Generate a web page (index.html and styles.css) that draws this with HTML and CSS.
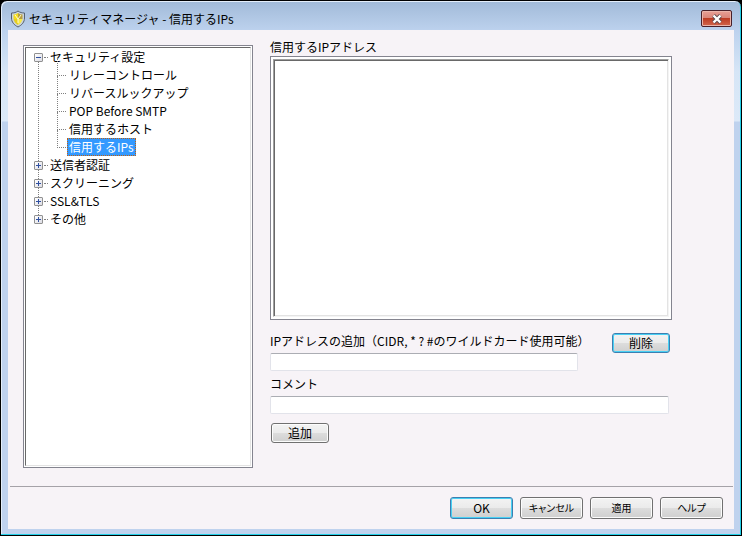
FILE: index.html
```html
<!DOCTYPE html>
<html lang="ja">
<head>
  <meta charset="UTF-8" />
  <meta name="viewport" content="width=device-width, initial-scale=1.0" />
  <title>セキュリティマネージャ - 信用するIPs</title>
  <link rel="stylesheet" href="styles.css">
</head>
<body>
  <div class="window">
    <header class="titlebar">
      <svg class="shield" width="16" height="18" viewBox="0 0 16 18">
        <path d="M8 1C6 2.500 4 3 1.500 3V8C1.500 12 4 15 8 17C12 15 14.500 12 14.500 8V3C12 3 10 2.500 8 1Z" fill="#c9d3dc" stroke="#56616e"/>
        <path d="M8 3C6.500 4 5 4.500 3.500 4.500V9H8Z" fill="#f4dc1c"/>
        <path d="M8 3C9.500 4 11 4.500 12.500 4.500V9H8Z" fill="#b9a040"/>
        <path d="M3.500 9H8V15C5.500 13.500 4 11.500 3.500 9Z" fill="#e6cf20"/>
        <path d="M12.500 9H8V15C10.500 13.500 12 11.500 12.500 9Z" fill="#f7e94a"/>
        <path d="M5 5L8 9L11 5M8 9V13" stroke="#fffbd0" fill="none"/>
      </svg>
      <h1>セキュリティマネージャ - 信用するIPs</h1>
      <button class="close" aria-label="閉じる">
        <svg width="12" height="10" viewBox="0 0 12 10">
          <path d="M2.500 1.500L9.500 8.500M9.500 1.500L2.500 8.500" stroke="#5a4a50" stroke-width="4"/>
          <path d="M2.500 1.500L9.500 8.500M9.500 1.500L2.500 8.500" stroke="#fff" stroke-width="2.400"/>
        </svg>
      </button>
    </header>

    <div class="client">
      <main class="panels">
        <nav class="tree">
          <ul class="roots">
            <li>
              <button class="toggle open" aria-label="折りたたむ"></button><a href="#">セキュリティ設定</a>
              <ul class="children">
                <li><a href="#">リレーコントロール</a></li>
                <li><a href="#">リバースルックアップ</a></li>
                <li><a href="#">POP Before SMTP</a></li>
                <li><a href="#">信用するホスト</a></li>
                <li><a href="#" class="selected">信用するIPs</a></li>
              </ul>
            </li>
            <li><button class="toggle" aria-label="展開"></button><a href="#">送信者認証</a></li>
            <li><button class="toggle" aria-label="展開"></button><a href="#">スクリーニング</a></li>
            <li><button class="toggle" aria-label="展開"></button><a href="#">SSL&amp;TLS</a></li>
            <li><button class="toggle" aria-label="展開"></button><a href="#">その他</a></li>
          </ul>
        </nav>

        <form class="settings">
          <label for="ip-list">信用するIPアドレス</label>
          <div class="list-frame">
            <select id="ip-list" size="10"></select>
          </div>

          <div class="add-row">
            <div class="field">
              <label for="ip">IPアドレスの追加（CIDR, * ? #のワイルドカード使用可能）</label>
              <input type="text" id="ip">
            </div>
            <button type="button" class="btn small default">削除</button>
          </div>

          <div class="field comment">
            <label for="comment">コメント</label>
            <input type="text" id="comment">
          </div>
          <button type="button" class="btn small add">追加</button>
        </form>
      </main>

      <footer class="actions">
        <button class="btn default ok">OK</button>
        <button class="btn">キャンセル</button>
        <button class="btn">適用</button>
        <button class="btn">ヘルプ</button>
      </footer>
    </div>
  </div>
</body>
</html>
```
FILE: styles.css
```css
:root {
  --frame: #bfd2ee;
  --face: #f7f3f7;
  --edge: #84848f;
  --select: #3399ff;
}

* {
  margin: 0;
  padding: 0;
  box-sizing: border-box;
}

body {
  background: #000;
  color: #000;
  font: 12px/18px "Noto Sans CJK JP", sans-serif;
}

button,
input,
select {
  font: inherit;
  color: inherit;
}

.window {
  display: flex;
  flex-direction: column;
  min-height: 100vh;
  padding: 0 6px 6px;
  background: linear-gradient(#a1bad8, #bdd2ee 30px, #d6e5f6 70px, #dce9f8 120px, var(--frame) 121px);
  border: 1px solid #000;
  border-radius: 7px 7px 0 0;
  box-shadow: inset -1px -1px #22d0e8, inset 1px 1px #e4eefa;
}

.titlebar {
  display: flex;
  align-items: center;
  height: 29px;
  padding: 6px 3px 0;
}

.titlebar h1 {
  flex: 1;
  margin-left: 3px;
  font-size: 12px;
  font-weight: normal;
}

.close {
  display: flex;
  align-items: center;
  justify-content: center;
  width: 31px;
  height: 17px;
  background: linear-gradient(#e8a096, #d98478 48%, #bd3c24 50%, #d2664c);
  border: 1px solid #48202a;
  border-radius: 2px;
  box-shadow: inset 0 0 0 1px #eab4aa;
}

.client {
  flex: 1;
  display: flex;
  flex-direction: column;
  margin: 0 1px;
  background: var(--face);
}

.panels {
  flex: 1;
  display: flex;
  gap: 17px;
  padding: 15px 62px 18px 15px;
}

.tree {
  width: 230px;
  padding: 1px;
  background: #fff;
  border: 1px solid var(--edge);
}

.roots {
  height: 100%;
  padding-left: 8px;
  border: 1px solid;
  border-color: #696969 #e3e3e3 #e3e3e3 #696969;
}

.tree ul {
  list-style: none;
}

.tree li {
  position: relative;
}

.tree a {
  display: inline-block;
  height: 18px;
  padding: 0 2px;
  color: #000;
  line-height: 17px;
  text-decoration: none;
  vertical-align: top;
}

.tree a.selected {
  background: var(--select);
  border: 1px dotted #c06010;
  padding: 0 1px;
  color: #fff;
  line-height: 15px;
}

.toggle {
  position: relative;
  z-index: 1;
  width: 9px;
  height: 9px;
  margin: 5px 5px 0 0;
  vertical-align: top;
  background:
    linear-gradient(#3050a0, #3050a0) center / 5px 1px no-repeat,
    linear-gradient(#3050a0, #3050a0) center / 1px 5px no-repeat,
    linear-gradient(135deg, #fff, #dcdce4);
  border: 1px solid #919191;
  border-radius: 1px;
}

.toggle.open {
  background:
    linear-gradient(#3050a0, #3050a0) center / 5px 1px no-repeat,
    linear-gradient(135deg, #fff, #dcdce4);
}

/* dotted connector lines */
.roots > li::before,
.children > li::before {
  content: "";
  position: absolute;
  top: 9px;
  border-top: 1px dotted #808080;
}

.roots > li::before {
  left: 10px;
  width: 4px;
}

.roots > li:not(:last-child)::after {
  content: "";
  position: absolute;
  left: 4px;
  top: 14px;
  bottom: -5px;
  border-left: 1px dotted #808080;
}

.children {
  padding-left: 33px;
}

.children > li::before {
  left: -10px;
  width: 9px;
}

.children > li::after {
  content: "";
  position: absolute;
  left: -10px;
  top: -8px;
  height: 18px;
  border-left: 1px dotted #808080;
}

.settings {
  flex: 1;
  display: flex;
  flex-direction: column;
  margin-top: -7px;
}

.list-frame {
  flex: 1;
  display: flex;
  padding: 2px;
  background: #fff;
  border: 1px solid var(--edge);
}

.list-frame select {
  flex: 1;
  background: #fff;
  border: 1px solid;
  border-color: #a0a0a0 #f4f4f4 #f4f4f4 #a0a0a0;
  border-radius: 0;
  box-shadow: inset 1px 1px #696969, inset -1px -1px #e3e3e3;
  outline: none;
}

.add-row {
  display: flex;
  align-items: flex-start;
  justify-content: space-between;
  margin: 13px 2px 0 0;
}

.field {
  display: flex;
  flex-direction: column;
}

.field label {
  line-height: 16px;
}

.add-row .field {
  width: 308px;
  white-space: nowrap;
}

.field input {
  height: 18px;
  margin-top: 4px;
  padding: 0 3px;
  background: #fff;
  border: 1px solid #e2e3ea;
  border-top-color: #abadb3;
  border-radius: 2px;
}

.comment {
  margin: 5px 3px 0 0;
}

.btn {
  width: 63px;
  height: 22px;
  background: linear-gradient(#f3f3f3, #ebebeb 48%, #dddddd 50%, #cfcfcf);
  border: 1px solid #707070;
  border-radius: 3px;
  box-shadow: inset 0 0 0 1px #fcfcfc;
  font-size: 10px;
  font-feature-settings: "palt";
  line-height: 18px;
}

.btn.default {
  border-color: #3c7fb1;
  box-shadow: inset 0 0 0 1px #48d0f4;
}

.btn.small {
  width: 58px;
  height: 20px;
  font-size: 12px;
  line-height: 16px;
}

.btn.ok {
  font-size: 12px;
}

.btn.add {
  margin: 9px 0 25px 1px;
}

.actions {
  display: flex;
  justify-content: flex-end;
  gap: 7px;
  margin: 0 1px 0 2px;
  padding: 10px;
  border-top: 1px solid #a5a2a8;
}
```
